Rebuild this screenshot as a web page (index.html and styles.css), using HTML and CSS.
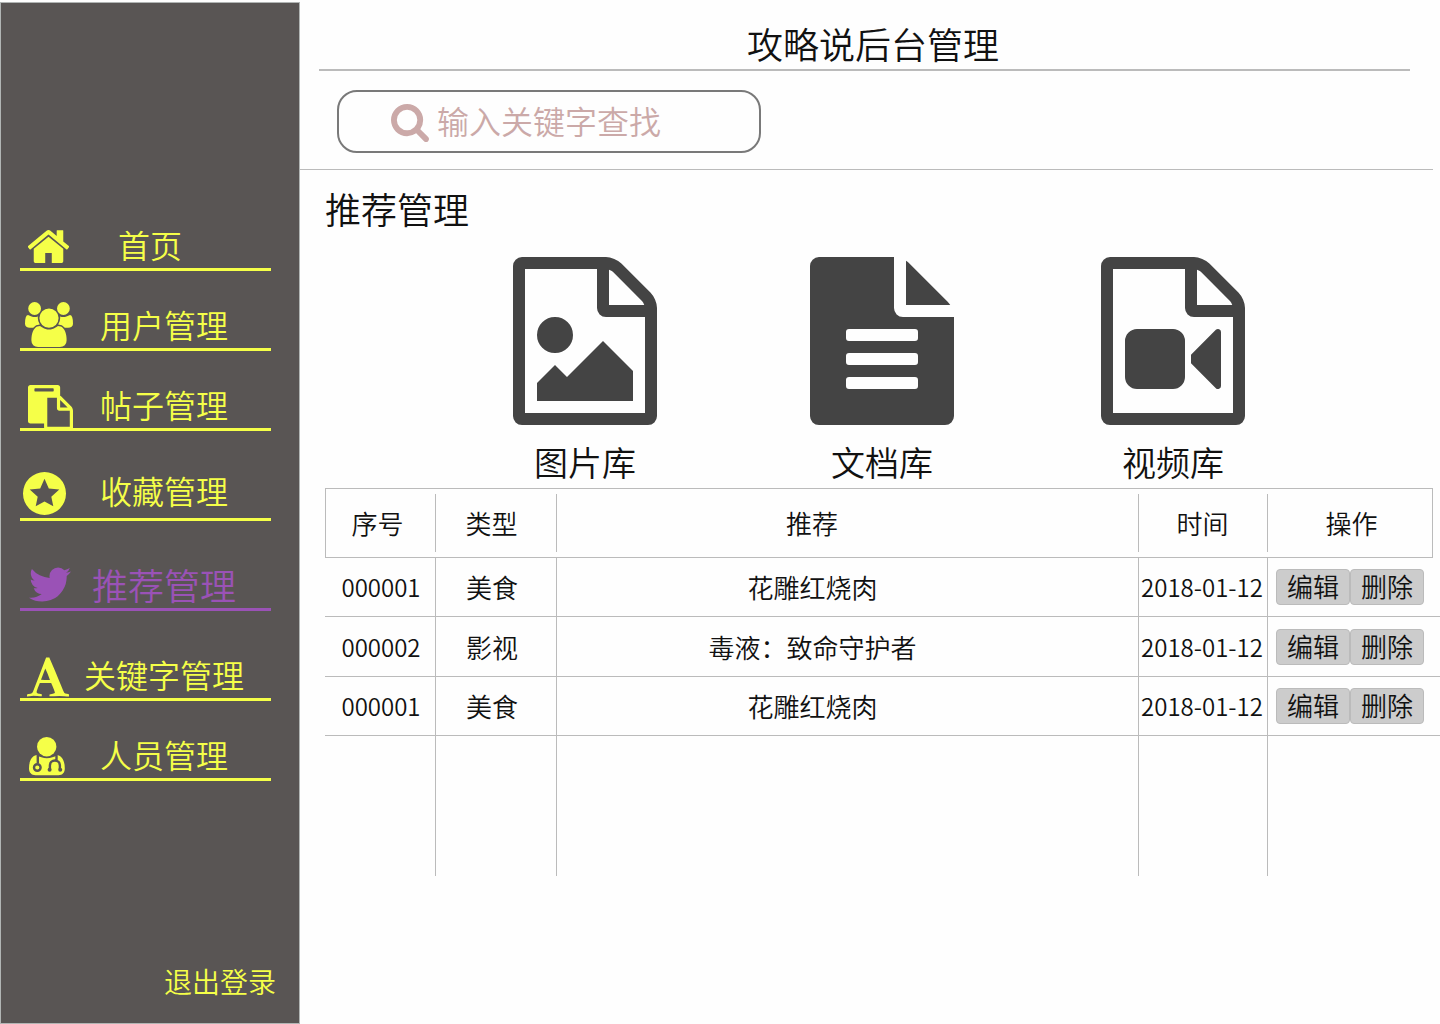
FILE: index.html
```html
<!DOCTYPE html>
<html lang="zh-CN">
<head>
<meta charset="utf-8">
<meta name="viewport" content="width=device-width, initial-scale=1">
<title>攻略说后台管理</title>
<link rel="stylesheet" href="styles.css">
</head>
<body>
<div class="layout">
  <aside class="sidebar">
    <nav class="nav">
      <a class="nav-item nav-item--home" href="#">
        <svg class="nav-icon" viewBox="0 0 50 48" aria-hidden="true"><svg x="5" y="10" width="41" height="33" viewBox="96 253 1600 1283"><path d="M1472 992v480q0 26-19 45t-45 19h-384v-384h-256v384h-384q-26 0-45-19t-19-45v-480q0-1 .5-3t.5-3l575-474 575 474q1 2 1 6zm223-69l-62 74q-8 9-21 11h-3q-13 0-21-7l-692-577-692 577q-12 8-24 7-13-2-21-11l-62-74q-8-10-7-23.5t11-21.5l719-599q32-26 76-26t76 26l244 204v-195q0-14 9-23t23-9h192q14 0 23 9t9 23v408l219 182q10 8 11 21.5t-7 23.5z"/></svg></svg>
        <span class="nav-label">首页</span>
      </a>
      <a class="nav-item" href="#">
        <svg class="nav-icon" viewBox="0 0 50 48" aria-hidden="true"><svg x="2" y="2" width="48" height="45" viewBox="64 0 1920 1792"><path d="M657 896q-162 5-265 128h-134q-82 0-138-40.5t-56-118.5q0-353 124-353 6 0 43.5 21t97.5 42.5 119 21.5q67 0 133-23-5 37-5 66 0 139 81 256zm1071 637q0 120-73 189.5t-194 69.5h-874q-121 0-194-69.5t-73-189.5q0-53 3.5-103.5t14-109 26.5-108.5 43-97.5 62-81 85.5-53.5 111.5-20q10 0 43 21.5t73 48 107 48 135 21.5 135-21.5 107-48 73-48 43-21.5q61 0 111.5 20t85.5 53.5 62 81 43 97.5 26.5 108.5 14 109 3.5 103.5zm-1024-1277q0 106-75 181t-181 75-181-75-75-181 75-181 181-75 181 75 75 181zm704 384q0 159-112.5 271.5t-271.5 112.5-271.5-112.5-112.5-271.5 112.5-271.5 271.5-112.5 271.5 112.5 112.5 271.5zm576 225q0 78-56 118.5t-138 40.5h-134q-103-123-265-128 81-117 81-256 0-29-5-66 66 23 133 23 59 0 119-21.5t97.5-42.5 43.5-21q124 0 124 353zm-128-609q0 106-75 181t-181 75-181-75-75-181 75-181 181-75 181 75 75 181z"/></svg></svg>
        <span class="nav-label">用户管理</span>
      </a>
      <a class="nav-item" href="#">
        <svg class="nav-icon" viewBox="0 0 50 48" aria-hidden="true"><svg x="5" y="5" width="45" height="45" viewBox="0 0 1792 1792"><path d="M768 1664h896v-640h-416q-40 0-68-28t-28-68v-416h-384v1152zm256-1440v-64q0-13-9.5-22.5t-22.5-9.5h-704q-13 0-22.5 9.5t-9.5 22.5v64q0 13 9.5 22.5t22.5 9.5h704q13 0 22.5-9.5t9.5-22.5zm256 672h299l-299-299v299zm512 128v672q0 40-28 68t-68 28h-960q-40 0-68-28t-28-68v-160h-544q-40 0-68-28t-28-68v-1344q0-40 28-68t68-28h1088q40 0 68 28t28 68v328q21 13 36 28l408 408q28 28 48 76t20 88z"/></svg></svg>
        <span class="nav-label">帖子管理</span>
      </a>
      <a class="nav-item nav-item--tall nav-item--raised" href="#">
        <svg class="nav-icon" viewBox="0 0 50 48" aria-hidden="true"><path fill-rule="evenodd" d="M21.500 2a21.500 21.500 0 1 0 0 43a21.500 21.500 0 1 0 0-43zM21.500 8.700l4.300 9.800 10.500.9-8 7.300 2 9.500-8.800-4.700-8.800 4.700 2-9.500-8-7.300 10.500-.9z"/></svg>
        <span class="nav-label">收藏管理</span>
      </a>
      <a class="nav-item nav-item--tall nav-item--active" href="#" aria-current="page">
        <svg class="nav-icon" viewBox="0 0 50 48" aria-hidden="true"><svg x="6" y="7" width="42" height="35" viewBox="108 256 1576 1280"><path d="M1684 408q-67 98-162 167 1 14 1 42 0 130-38 259.500t-115.500 248.500-184.500 210.500-258 146-323 54.500q-271 0-496-145 35 4 78 4 225 0 401-138-105-2-188-64.500t-114-159.500q33 5 61 5 43 0 85-11-112-23-185.500-111.500t-73.500-205.500v-4q68 38 146 41-66-44-105-115t-39-154q0-88 44-163 121 149 294.500 238.500t371.500 99.500q-8-38-8-74 0-134 94.500-228.500t228.500-94.500q140 0 236 102 109-21 205-78-37 115-142 178 93-10 186-50z"/></svg></svg>
        <span class="nav-label">推荐管理</span>
      </a>
      <a class="nav-item nav-item--tall" href="#">
        <svg class="nav-icon" viewBox="0 0 50 48" aria-hidden="true"><svg x="4" y="7" width="42" height="40" viewBox="64 128 1664 1536"><path d="M789 559l-170 450q33 0 136.500 2t160.500 2q19 0 57-2-87-253-184-452zm-725 1105l2-79q23-7 56-12.500t57-10.500 49.500-14.500 44.500-29 31-50.500l237-616 280-724h128q8 14 11 21l205 480q33 78 106 257.500t114 274.500q15 34 58 144.500t72 168.500q20 45 35 57 19 15 88 29.500t84 20.500q6 38 6 57 0 5-.5 13.500t-.5 12.500q-63 0-190-8t-191-8q-76 0-215 7t-178 8q0-43 4-78l131-28q1 0 12.500-2.500t15.500-3.500 14.500-4.500 15-6.500 11-8 9-11 2.500-14q0-16-31-96.500t-72-177.500-42-100l-450-2q-26 58-76.500 195.500t-50.500 162.500q0 22 14 37.500t43.500 24.500 48.500 13.500 57 8.500 41 4q1 19 1 58 0 9-2 27-58 0-174.500-10t-174.500-10q-8 0-26.500 4t-21.500 4q-80 14-188 14z"/></svg></svg>
        <span class="nav-label">关键字管理</span>
      </a>
      <a class="nav-item" href="#">
        <svg class="nav-icon" viewBox="0 0 50 48" aria-hidden="true"><circle cx="23.700" cy="16.700" r="9.700"/><path d="M13.500 25c-5 1.200-7.500 6-7.500 13.500 0 4 2.500 6.700 6.500 6.700h23c4 0 6.300-2.700 6.300-6.700 0-7.500-2.500-12.300-7.500-13.500-6 4.200-14.800 4.200-20.800 0z"/><g class="nav-icon-cut"><path d="M14.800 24v9.500M33.500 24v6M26.900 39v-3.500a5 5 0 0 1 10 0v3.500"/><circle cx="14.300" cy="37.500" r="3.300"/></g><g class="nav-icon-dots"><circle cx="26.600" cy="39.700" r="2"/><circle cx="37.200" cy="39.700" r="2"/></g></svg>
        <span class="nav-label">人员管理</span>
      </a>
    </nav>
    <a class="logout" href="#">退出登录</a>
  </aside>

  <main class="main">
    <header class="header">
      <h1 class="title">攻略说后台管理</h1>
    </header>
    <div class="search-bar">
      <form class="search" role="search">
        <label class="search-label" for="keyword" aria-label="关键字">
          <svg class="search-icon" viewBox="64 128 1664 1664" aria-hidden="true"><path d="M1216 832q0-185-131.500-316.500t-316.500-131.500-316.500 131.500-131.500 316.500 131.500 316.500 316.500 131.500 316.500-131.500 131.500-316.500zm512 832q0 52-38 90t-90 38q-54 0-90-38l-343-342q-179 124-399 124-143 0-273.500-55.500t-225-150-150-225-55.500-273.500 55.500-273.500 150-225 225-150 273.500-55.500 273.500 55.500 225 150 150 225 55.500 273.500q0 220-124 399l343 343q37 37 37 90z"/></svg>
        </label>
        <input class="search-input" id="keyword" type="text" placeholder="输入关键字查找">
      </form>
    </div>

    <section class="content">
      <h2 class="section-title">推荐管理</h2>
      <div class="libraries">
        <a class="library" href="#">
          <svg class="library-icon" viewBox="128 0 1536 1792" aria-hidden="true"><path d="M1596 380q28 28 48 76t20 88v1152q0 40-28 68t-68 28h-1344q-40 0-68-28t-28-68v-1600q0-40 28-68t68-28h896q40 0 88 20t76 48zm-444-244v376h376q-10-29-22-41l-313-313q-12-12-41-22zm384 1528v-1024h-416q-40 0-68-28t-28-68v-416h-768v1536h1280zm-128-448v320h-1024v-192l192-192 128 128 384-384zm-832-192q-80 0-136-56t-56-136 56-136 136-56 136 56 56 136-56 136-136 56z"/></svg>
          <span class="library-label">图片库</span>
        </a>
        <a class="library" href="#">
          <svg class="library-icon" viewBox="128 0 1536 1792" aria-hidden="true"><path fill-rule="evenodd" d="M1596 476q14 14 28 36h-472v-472q22 14 36 28zM1120 640h544v1056q0 40-28 68t-68 28h-1344q-40 0-68-28t-28-68v-1600q0-40 28-68t68-28h800v544q0 40 28 68t68 28zM544 768h704q32 0 32 32v64q0 32-32 32h-704q-32 0-32-32v-64q0-32 32-32zM544 1024h704q32 0 32 32v64q0 32-32 32h-704q-32 0-32-32v-64q0-32 32-32zM544 1280h704q32 0 32 32v64q0 32-32 32h-704q-32 0-32-32v-64q0-32 32-32z"/></svg>
          <span class="library-label">文档库</span>
        </a>
        <a class="library" href="#">
          <svg class="library-icon" viewBox="128 0 1536 1792" aria-hidden="true"><path d="M1596 380q28 28 48 76t20 88v1152q0 40-28 68t-68 28h-1344q-40 0-68-28t-28-68v-1600q0-40 28-68t68-28h896q40 0 88 20t76 48zm-444-244v376h376q-10-29-22-41l-313-313q-12-12-41-22zm384 1528v-1024h-416q-40 0-68-28t-28-68v-416h-768v1536h1280zM896 768q52 0 90 38t38 90v384q0 52-38 90t-90 38h-384q-52 0-90-38t-38-90v-384q0-52 38-90t90-38h384zM1388 770q20 8 20 30v576q0 22-20 30-8 2-12 2-14 0-23-9l-265-266v-90l265-266q9-9 23-9 4 0 12 2z"/></svg>
          <span class="library-label">视频库</span>
        </a>
      </div>

      <table class="records">
        <colgroup>
          <col class="col-id"><col class="col-type"><col class="col-name"><col class="col-date"><col class="col-actions"><col class="col-edge">
        </colgroup>
        <thead>
          <tr><th scope="col" class="id">序号</th><th scope="col" class="type">类型</th><th scope="col" class="name">推荐</th><th scope="col">时间</th><th scope="col" class="ops">操作</th></tr>
        </thead>
        <tbody>
          <tr><td class="num">000001</td><td class="type">美食</td><td class="name">花雕红烧肉</td><td class="num date">2018-01-12</td><td class="actions" colspan="2"><div class="buttons"><button type="button" class="btn">编辑</button><button type="button" class="btn">删除</button></div></td></tr>
          <tr><td class="num">000002</td><td class="type">影视</td><td class="name">毒液：致命守护者</td><td class="num date">2018-01-12</td><td class="actions" colspan="2"><div class="buttons"><button type="button" class="btn">编辑</button><button type="button" class="btn">删除</button></div></td></tr>
          <tr><td class="num">000001</td><td class="type">美食</td><td class="name">花雕红烧肉</td><td class="num date">2018-01-12</td><td class="actions" colspan="2"><div class="buttons"><button type="button" class="btn">编辑</button><button type="button" class="btn">删除</button></div></td></tr>
          <tr class="blank"><td></td><td></td><td></td><td></td><td colspan="2"></td></tr>
        </tbody>
      </table>
    </section>
  </main>
</div>
</body>
</html>
```
FILE: styles.css
```css
:root {
  --accent: #f5ff48;
  --active: #9a52b6;
  --panel: #595554;
  --line: #bbb;
}

* {
  box-sizing: border-box;
}

body {
  margin: 0;
  background: #fefefe;
  color: #111;
  font-family: "Noto Sans CJK SC", "Noto Sans", sans-serif;
  font-size: 26px;
  font-weight: 350;
}

a {
  color: inherit;
  text-decoration: none;
}

.layout {
  display: flex;
  min-height: 100vh;
  padding-top: 2px;
}

.sidebar {
  display: flex;
  flex-direction: column;
  flex: 0 0 300px;
  padding: 188px 23px 20px 19px;
  border: 1px solid #b1b5b4;
  background: var(--panel);
  color: var(--accent);
}

.nav-item {
  display: flex;
  align-items: flex-end;
  width: 251px;
  height: 80px;
  padding-left: 3px;
  border-bottom: 3px solid currentColor;
  font-size: 32px;
  line-height: 40px;
}

.nav-item--tall {
  height: 90px;
}

.nav-item--active {
  color: var(--active);
  font-size: 36px;
}

.nav-icon {
  flex: none;
  width: 50px;
  height: 48px;
  overflow: visible;
  fill: currentColor;
}

.nav-icon-cut {
  fill: none;
  stroke: var(--panel);
  stroke-width: 2.4px;
}

.nav-icon-dots {
  fill: var(--panel);
}

.nav-label {
  flex: 1;
  padding: 0 16px 4px 0;
  text-align: center;
}

.nav-item--home .nav-label {
  padding-right: 44px;
}

.nav-item--raised .nav-label {
  padding-bottom: 8px;
}

.logout {
  align-self: flex-end;
  margin-top: auto;
  font-size: 28px;
  line-height: 44px;
}

.main {
  flex: 1;
  min-width: 0;
}

.header {
  margin: 0 30px 0 19px;
  padding: 17px 0 2px 17px;
  border-bottom: 2px solid var(--line);
}

.title,
.section-title {
  margin: 0;
  font-size: 36px;
  font-weight: inherit;
  line-height: 48px;
}

.title {
  text-align: center;
}

.search-bar {
  margin-right: 7px;
  padding: 19px 37px 16px;
  border-bottom: 1px solid var(--line);
}

.search {
  display: flex;
  align-items: center;
  width: 424px;
  max-width: 100%;
  height: 63px;
  padding: 0 20px 0 52px;
  border: 2px solid #797979;
  border-radius: 20px;
}

.search-label {
  display: flex;
}

.search-icon {
  width: 38px;
  height: 38px;
  margin-top: 2px;
  fill: #cba9a8;
}

.search-input {
  flex: 1;
  min-width: 0;
  margin: 0 0 0 8px;
  padding: 0 0 4px;
  border: 0;
  outline: 0;
  background: none;
  color: #111;
  font: inherit;
  font-size: 32px;
  line-height: 48px;
}

.search-input::placeholder {
  color: #cba9a8;
  opacity: 1;
}

.content {
  padding: 14px 0 0 25px;
}

.libraries {
  display: grid;
  grid-template-columns: 297px 291px 144px;
  justify-content: center;
  margin: 25px 7px 2px 0;
}

.library {
  display: flex;
  flex-direction: column;
  align-items: center;
  width: 144px;
}

.library-icon {
  width: 144px;
  height: 168px;
  fill: #444;
}

.library-label {
  margin-top: 13px;
  font-size: 34px;
  line-height: 48px;
}

.records {
  width: 100%;
  border-spacing: 0;
  table-layout: fixed;
  line-height: 40px;
}

.col-id {
  width: 110px;
}

.col-type {
  width: 121px;
}

.col-date {
  width: 129px;
}

.col-actions {
  width: 166px;
}

.col-edge {
  width: 7px;
}

.records th,
.records td {
  padding: 0;
  text-align: center;
}

.records th {
  height: 70px;
  border: solid var(--line);
  border-width: 1px 0;
  font-weight: inherit;
}

.records th:first-child {
  border-left-width: 1px;
}

.records th:last-child {
  border-right-width: 1px;
}

.records th + th {
  background: linear-gradient(var(--line), var(--line)) no-repeat left center / 1px 58px;
}

.records td {
  height: 59px;
  border-bottom: 1px solid var(--line);
}

.records tr:nth-child(2) td {
  height: 60px;
}

.records td + td {
  border-left: 1px solid var(--line);
}

.records .blank td {
  height: 140px;
  border-bottom: 0;
}

.records .id {
  padding-right: 6px;
}

.records .ops {
  padding-left: 4px;
}

.records .type {
  padding-right: 8px;
}

.records .name {
  padding-right: 70px;
}

.records .num {
  padding-left: 2px;
  font-size: 24px;
}

.records .date {
  padding: 0 2px 0 0;
}

.records .actions {
  padding-left: 8px;
}

.buttons {
  display: flex;
}

.btn {
  width: 74px;
  height: 36px;
  padding: 0 0 2px;
  border: 1px solid var(--line);
  border-radius: 4px;
  background: #ccc;
  color: #111;
  font: inherit;
  line-height: 32px;
}
```
